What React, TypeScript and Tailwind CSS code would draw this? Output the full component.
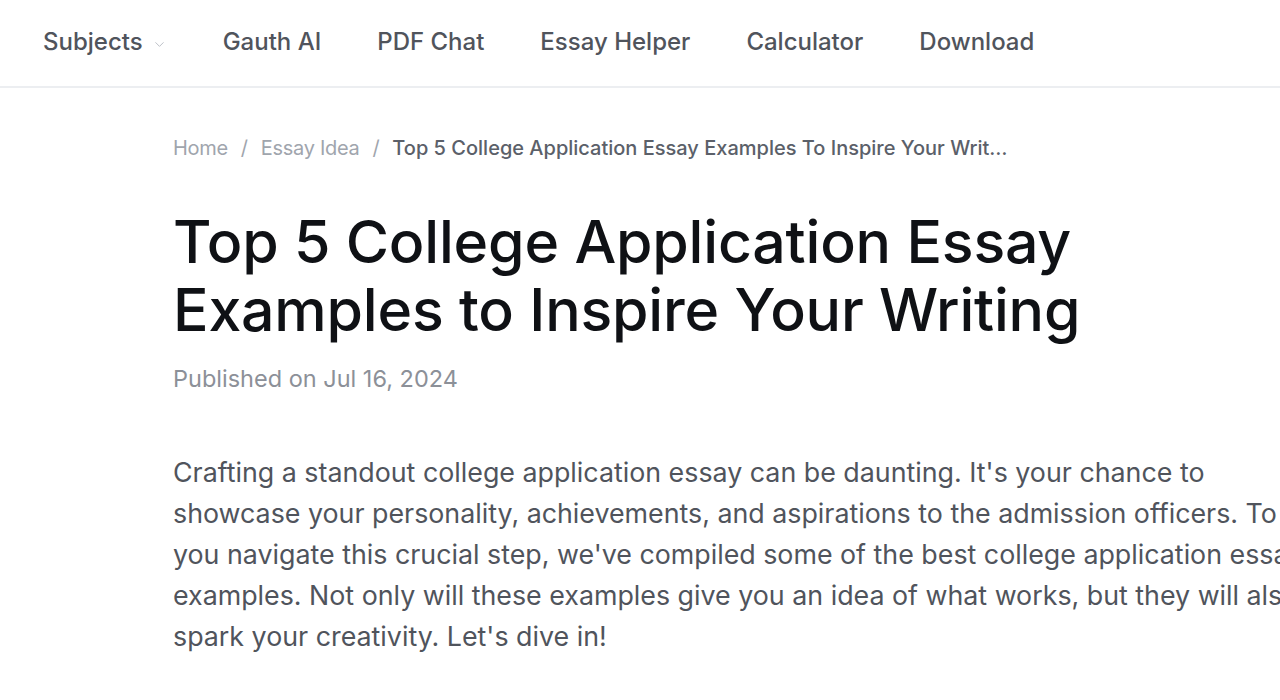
import { ChevronDown } from "lucide-react";

const NAV = ["Gauth AI", "PDF Chat", "Essay Helper", "Calculator", "Download"];

const INTRO = [
  "Crafting a standout college application essay can be daunting. It's your chance to",
  "showcase your personality, achievements, and aspirations to the admission officers. To help",
  "you navigate this crucial step, we've compiled some of the best college application essay",
  "examples. Not only will these examples give you an idea of what works, but they will also",
  "spark your creativity. Let's dive in!",
];

export default function App() {
  return (
    <div className="w-[1280px] h-[700px] overflow-hidden bg-white font-['Inter',sans-serif]">
      <header className="h-[88px] border-b-2 border-[#eceef1] flex items-center pl-[43px] pb-[2px]">
        <nav className="flex items-center gap-[56px] text-[24px] font-medium text-[#50545c]">
          <button className="flex items-center gap-[9px]">
            Subjects
            <ChevronDown size={15} strokeWidth={1.5} className="text-[#b8bcc3] mt-1" />
          </button>
          {NAV.map((n) => (
            <a key={n} href="#">{n}</a>
          ))}
        </nav>
      </header>

      <main className="pl-[173px] pt-[48px]">
        <div className="flex items-center text-[20px] leading-[24px] text-[#a0a5ad] w-[838px] tracking-[-0.3px]">
          <a href="#" className="shrink-0">Home</a>
          <span className="mx-[13px]">/</span>
          <a href="#" className="shrink-0">Essay Idea</a>
          <span className="mx-[13px]">/</span>
          <span className="truncate font-medium text-[#5b6069] tracking-[0px]">
            Top 5 College Application Essay Examples To Inspire Your Writing
          </span>
        </div>

        <h1 className="mt-[48px] w-[1000px] text-[59px] leading-[68px] font-medium text-[#0f1115] tracking-[-0.2px]">
          Top 5 College Application Essay Examples to Inspire Your Writing
        </h1>

        <p className="mt-[21px] text-[23.5px] leading-[28px] text-[#8c9098]">
          Published on Jul 16, 2024
        </p>

        <p className="mt-[59px] text-[26.8px] leading-[41px] text-[#50545c]">
          {INTRO.map((line) => (
            <span key={line} className="block whitespace-nowrap">{line}</span>
          ))}
        </p>
      </main>
    </div>
  );
}
